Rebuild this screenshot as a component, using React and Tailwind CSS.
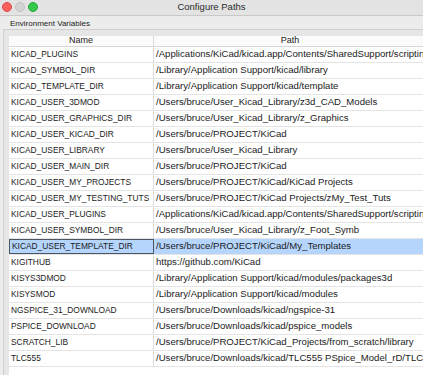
import React from 'react';

const rows = [
  ['KICAD_PLUGINS', '/Applications/KiCad/kicad.app/Contents/SharedSupport/scripting/plugins'],
  ['KICAD_SYMBOL_DIR', '/Library/Application Support/kicad/library'],
  ['KICAD_TEMPLATE_DIR', '/Library/Application Support/kicad/template'],
  ['KICAD_USER_3DMOD', '/Users/bruce/User_Kicad_Library/z3d_CAD_Models'],
  ['KICAD_USER_GRAPHICS_DIR', '/Users/bruce/User_Kicad_Library/z_Graphics'],
  ['KICAD_USER_KICAD_DIR', '/Users/bruce/PROJECT/KiCad'],
  ['KICAD_USER_LIBRARY', '/Users/bruce/User_Kicad_Library'],
  ['KICAD_USER_MAIN_DIR', '/Users/bruce/PROJECT/KiCad'],
  ['KICAD_USER_MY_PROJECTS', '/Users/bruce/PROJECT/KiCad/KiCad Projects'],
  ['KICAD_USER_MY_TESTING_TUTS', '/Users/bruce/PROJECT/KiCad Projects/zMy_Test_Tuts'],
  ['KICAD_USER_PLUGINS', '/Applications/KiCad/kicad.app/Contents/SharedSupport/scripting/plugins'],
  ['KICAD_USER_SYMBOL_DIR', '/Users/bruce/User_Kicad_Library/z_Foot_Symb'],
  ['KICAD_USER_TEMPLATE_DIR', '/Users/bruce/PROJECT/KiCad/My_Templates'],
  ['KIGITHUB', 'https://github.com/KiCad'],
  ['KISYS3DMOD', '/Library/Application Support/kicad/modules/packages3d'],
  ['KISYSMOD', '/Library/Application Support/kicad/modules'],
  ['NGSPICE_31_DOWNLOAD', '/Users/bruce/Downloads/kicad/ngspice-31'],
  ['PSPICE_DOWNLOAD', '/Users/bruce/Downloads/kicad/pspice_models'],
  ['SCRATCH_LIB', '/Users/bruce/PROJECT/KiCad_Projects/from_scratch/library'],
  ['TLC555', '/Users/bruce/Downloads/kicad/TLC555 PSpice_Model_rD/TLC555.lib'],
];

const SELECTED = 12;

const App = () => {
  return (
    <div
      className="w-[423px] h-[375px] overflow-hidden bg-[#ececec] flex flex-col text-[#1b1b1b]"
      style={{ fontFamily: '"Liberation Sans", Arial, sans-serif' }}
    >
      {/* Title bar */}
      <div className="relative h-[16px] shrink-0 flex items-center justify-center bg-[#e3e3e3] border-b border-[#c9c9c9]">
        <div className="absolute left-[2px] top-[2px] flex gap-[3px]">
          <span className="w-[10px] h-[10px] rounded-full bg-[#fc605c] border border-[#de4a45]" />
          <span className="w-[10px] h-[10px] rounded-full bg-[#d3d3d3] border border-[#c0c0c0]" />
          <span className="w-[10px] h-[10px] rounded-full bg-[#35c84a] border border-[#27a83a]" />
        </div>
        <span className="text-[9.5px] text-[#2a2a2a]">Configure Paths</span>
      </div>

      {/* Group label */}
      <div className="h-[13px] shrink-0 pl-[10px] pt-[2px] flex items-center text-[8px] text-[#222]">
        Environment Variables
      </div>

      {/* Panel */}
      <div className="flex-1 ml-[3px] border-l border-t border-[#cfcfcf] bg-[#e6e6e6] pl-[5px] pt-[6px] min-h-0">
        <div className="h-full bg-white overflow-hidden text-[8.4px]">
          {/* Header */}
          <div className="flex h-[11px] border-b border-[#d6d6d6] bg-[#fbfbfb]">
            <div className="w-[145px] shrink-0 flex items-center justify-center border-r border-[#dcdcdc] text-[9px]">
              Name
            </div>
            <div className="w-[272px] shrink-0 flex items-center justify-center text-[9px]">Path</div>
          </div>

          {rows.map(([name, path], i) => {
            const sel = i === SELECTED;
            return (
              <div
                key={name}
                className={`flex h-[16px] border-b border-[#e4e4e4] ${sel ? 'bg-[#b5d5fc]' : 'bg-white'}`}
              >
                <div
                  className={`w-[145px] shrink-0 flex items-center pl-[2px] whitespace-nowrap overflow-hidden ${
                    sel ? 'border border-[#4d5560]' : 'border-r border-[#dcdcdc]'
                  }`}
                >
                  {name}
                </div>
                <div className="flex-1 flex items-center pl-[2px] whitespace-nowrap overflow-hidden text-[9.6px]">
                  {path}
                </div>
              </div>
            );
          })}
        </div>
      </div>
    </div>
  );
};

export default App;
